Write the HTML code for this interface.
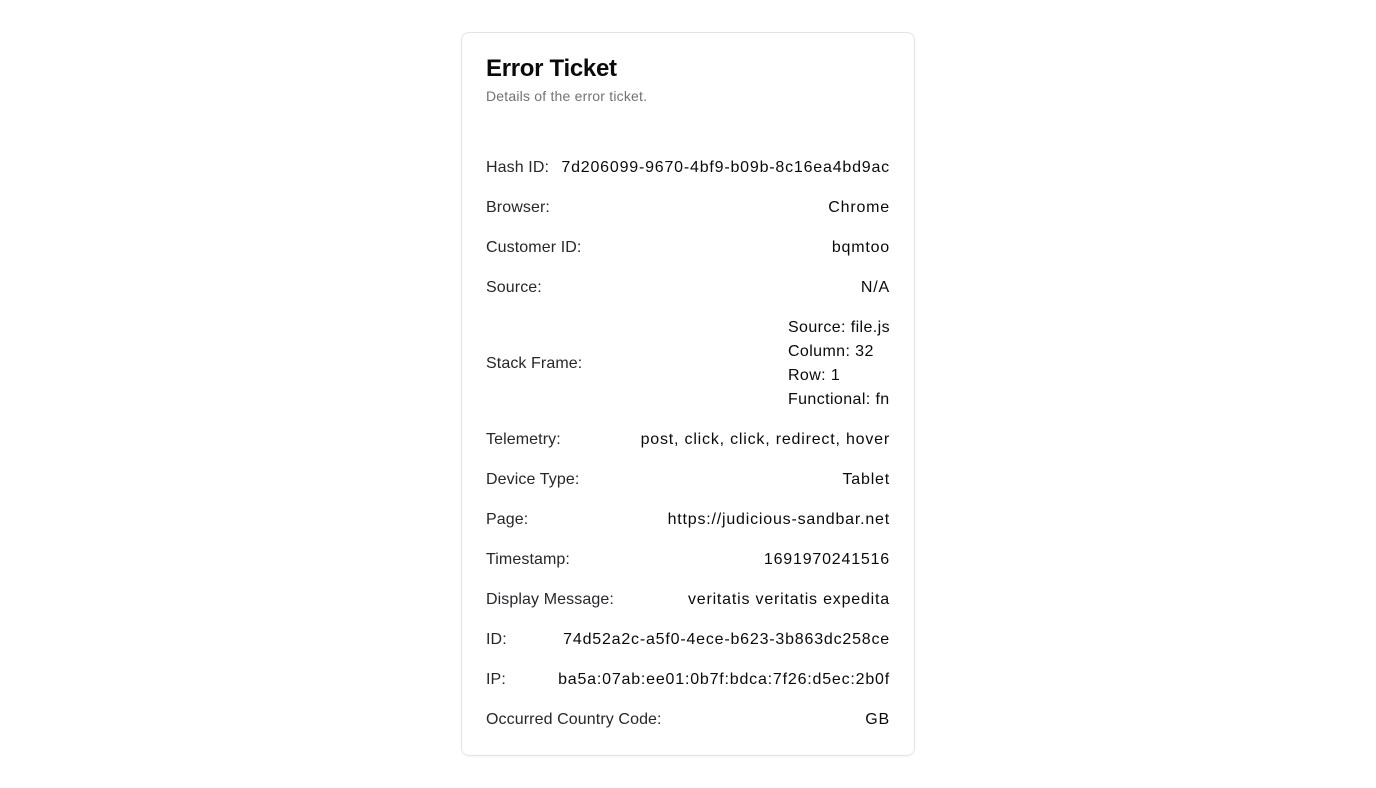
<!DOCTYPE html>
<html><head><style>
*{box-sizing:border-box;margin:0;padding:0}
body{width:1376px;height:788px;background:#fff;font-family:"Liberation Sans",sans-serif;color:#0a0a0a}
.card{position:absolute;left:461px;top:32px;width:454px;height:724px;border:1px solid #e4e4e7;border-radius:8px;padding:20px 24px 0 24px;box-shadow:0 1px 2px rgba(0,0,0,0.04)}
h1{font-size:24px;line-height:32px;font-weight:700;letter-spacing:-0.3px}
.sub{font-size:14px;line-height:20px;color:#71717a;margin-top:1px;letter-spacing:0.2px}
.rows{margin-top:50px}
.row{display:flex;justify-content:space-between;align-items:center;font-size:16px;line-height:24px;margin-bottom:16px}
.row .l{color:#27272a;white-space:nowrap;letter-spacing:0.1px}
.row .v{font-weight:500;text-align:right;white-space:nowrap;letter-spacing:0.8px}
.row .v.blk{text-align:left;letter-spacing:0.4px}
</style></head><body>
<div class="card">
<h1>Error Ticket</h1>
<div class="sub">Details of the error ticket.</div>
<div class="rows">
<div class="row"><span class="l">Hash ID:</span><span class="v">7d206099-9670-4bf9-b09b-8c16ea4bd9ac</span></div>
<div class="row"><span class="l">Browser:</span><span class="v">Chrome</span></div>
<div class="row"><span class="l">Customer ID:</span><span class="v">bqmtoo</span></div>
<div class="row"><span class="l">Source:</span><span class="v">N/A</span></div>
<div class="row"><span class="l">Stack Frame:</span><span class="v blk">Source: file.js<br>Column: 32<br>Row: 1<br>Functional: fn</span></div>
<div class="row"><span class="l">Telemetry:</span><span class="v">post, click, click, redirect, hover</span></div>
<div class="row"><span class="l">Device Type:</span><span class="v">Tablet</span></div>
<div class="row"><span class="l">Page:</span><span class="v">https://judicious-sandbar.net</span></div>
<div class="row"><span class="l">Timestamp:</span><span class="v">1691970241516</span></div>
<div class="row"><span class="l">Display Message:</span><span class="v">veritatis veritatis expedita</span></div>
<div class="row"><span class="l">ID:</span><span class="v">74d52a2c-a5f0-4ece-b623-3b863dc258ce</span></div>
<div class="row"><span class="l">IP:</span><span class="v">ba5a:07ab:ee01:0b7f:bdca:7f26:d5ec:2b0f</span></div>
<div class="row"><span class="l">Occurred Country Code:</span><span class="v">GB</span></div>
</div>
</div>
</body></html>
